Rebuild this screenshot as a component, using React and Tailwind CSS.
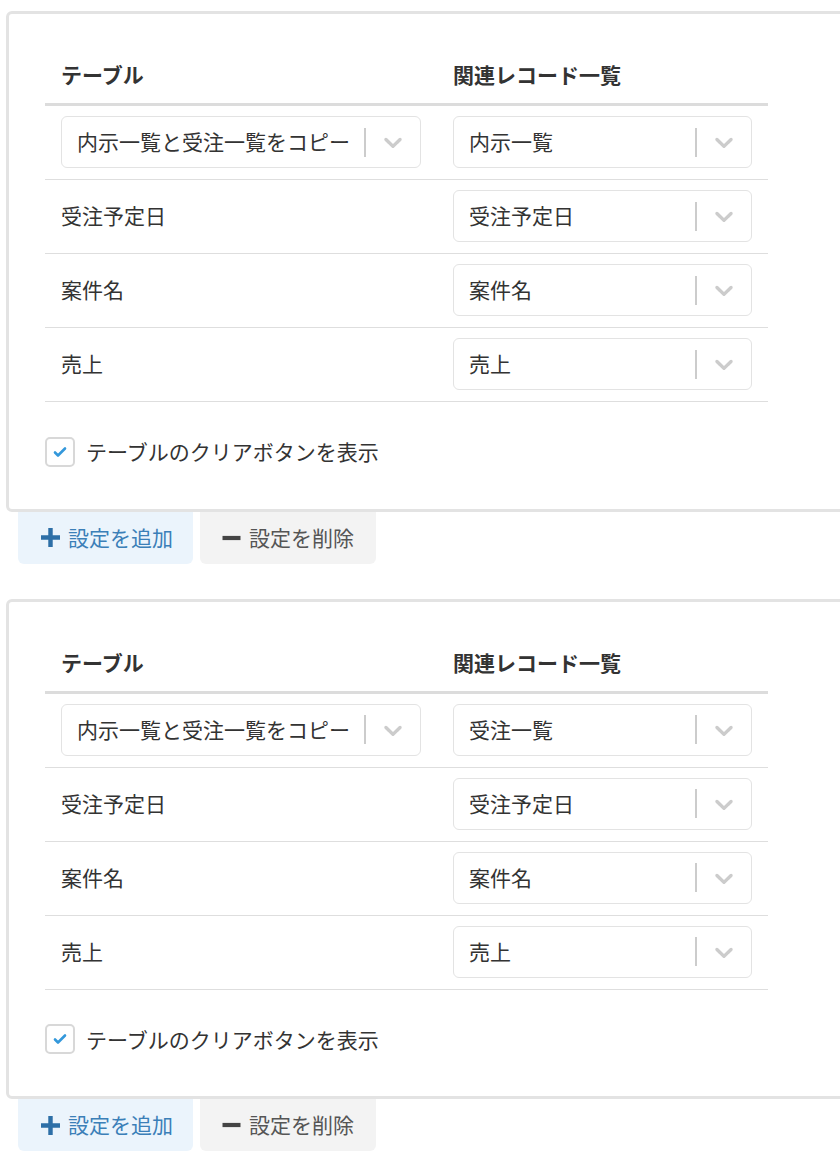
import React from "react";

const font = { fontFamily: '"Noto Sans CJK JP", "Noto Sans", sans-serif' };

function Chevron() {
  return (
    <svg viewBox="0 0 20 20" width="30" height="30" fill="#cccccc" aria-hidden="true">
      <path d="M4.516 7.548c0.436-0.446 1.043-0.481 1.576 0l3.908 3.747 3.908-3.747c0.533-0.481 1.141-0.446 1.574 0 0.436 0.445 0.408 1.197 0 1.615-0.406 0.418-4.695 4.502-4.695 4.502-0.217 0.223-0.502 0.335-0.787 0.335s-0.57-0.112-0.789-0.335c0 0-4.287-4.084-4.695-4.502s-0.436-1.17 0-1.615z" />
    </svg>
  );
}

function Select({ value }) {
  return (
    <div className="flex h-[52px] items-center rounded-[6px] border border-[#e3e3e3] bg-white">
      <div className="min-w-0 flex-1 truncate pl-[15px] text-[21px] text-[#333]">{value}</div>
      <div className="h-[29px] w-[2px] bg-[#cccccc]" />
      <div className="flex w-[54px] items-center justify-center">
        <Chevron />
      </div>
    </div>
  );
}

function Row({ label, left, value }) {
  return (
    <div className="grid grid-cols-[392px_331px] border-b border-[#dedede] pt-[10px] pb-[11px]">
      <div className="flex items-center px-[16px]">
        {left ? <div className="w-full"><Select value={left} /></div> : <span className="text-[21px] text-[#333]">{label}</span>}
      </div>
      <div className="px-[16px]">
        <Select value={value} />
      </div>
    </div>
  );
}

function SettingCard({ relation }) {
  const fields = ["受注予定日", "案件名", "売上"];
  return (
    <div>
      <div className="w-[900px] rounded-[6px] border-[3px] border-[#e3e3e3] bg-white pt-[31px] pl-[36px] pb-[41px]">
        <div className="w-[723px]">
          <div className="grid h-[61px] grid-cols-[392px_331px] items-center border-b-[3px] border-[#dcdcdc] pt-[2px] text-[21px] font-bold text-[#333]">
            <div className="px-[16px]">テーブル</div>
            <div className="px-[16px]">関連レコード一覧</div>
          </div>
          <Row left="内示一覧と受注一覧をコピー" value={relation} />
          {fields.map((f) => (
            <Row key={f} label={f} value={f} />
          ))}
        </div>
        <label className="mt-[34px] flex items-center gap-[11px]">
          <span className="flex h-[30px] w-[30px] items-center justify-center rounded-[5px] border-2 border-[#d8d8d8] bg-white">
            <svg viewBox="0 0 14 14" width="14" height="14" aria-hidden="true">
              <path d="M2 7.5l3 3 7-7" fill="none" stroke="#3498db" strokeWidth="2.6" strokeLinecap="round" strokeLinejoin="round" />
            </svg>
          </span>
          <span className="text-[21px] text-[#333]">テーブルのクリアボタンを表示</span>
        </label>
      </div>
      <div className="ml-[12px] flex gap-[7px]">
        <button type="button" className="flex h-[52px] w-[175px] items-center gap-[8px] rounded-b-[6px] bg-[#ebf4fc] pl-[23px] text-[21px] text-[#3b7fb8]">
          <svg viewBox="0 0 18 18" width="19" height="19" aria-hidden="true">
            <path d="M9 0v18M0 9h18" stroke="#2d6fa7" strokeWidth="4.2" />
          </svg>
          設定を追加
        </button>
        <button type="button" className="flex h-[52px] w-[176px] items-center gap-[8px] rounded-b-[6px] bg-[#f3f3f3] pl-[22px] text-[21px] text-[#555]">
          <svg viewBox="0 0 18 18" width="19" height="18" aria-hidden="true">
            <path d="M0 9h18" stroke="#444" strokeWidth="4.2" />
          </svg>
          設定を削除
        </button>
      </div>
    </div>
  );
}

export default function App() {
  return (
    <div className="min-h-[1167px] w-[840px] overflow-hidden bg-white pt-[11px] pl-[6px]" style={font}>
      <div className="flex flex-col gap-[35px]">
        <SettingCard relation="内示一覧" />
        <SettingCard relation="受注一覧" />
      </div>
    </div>
  );
}
